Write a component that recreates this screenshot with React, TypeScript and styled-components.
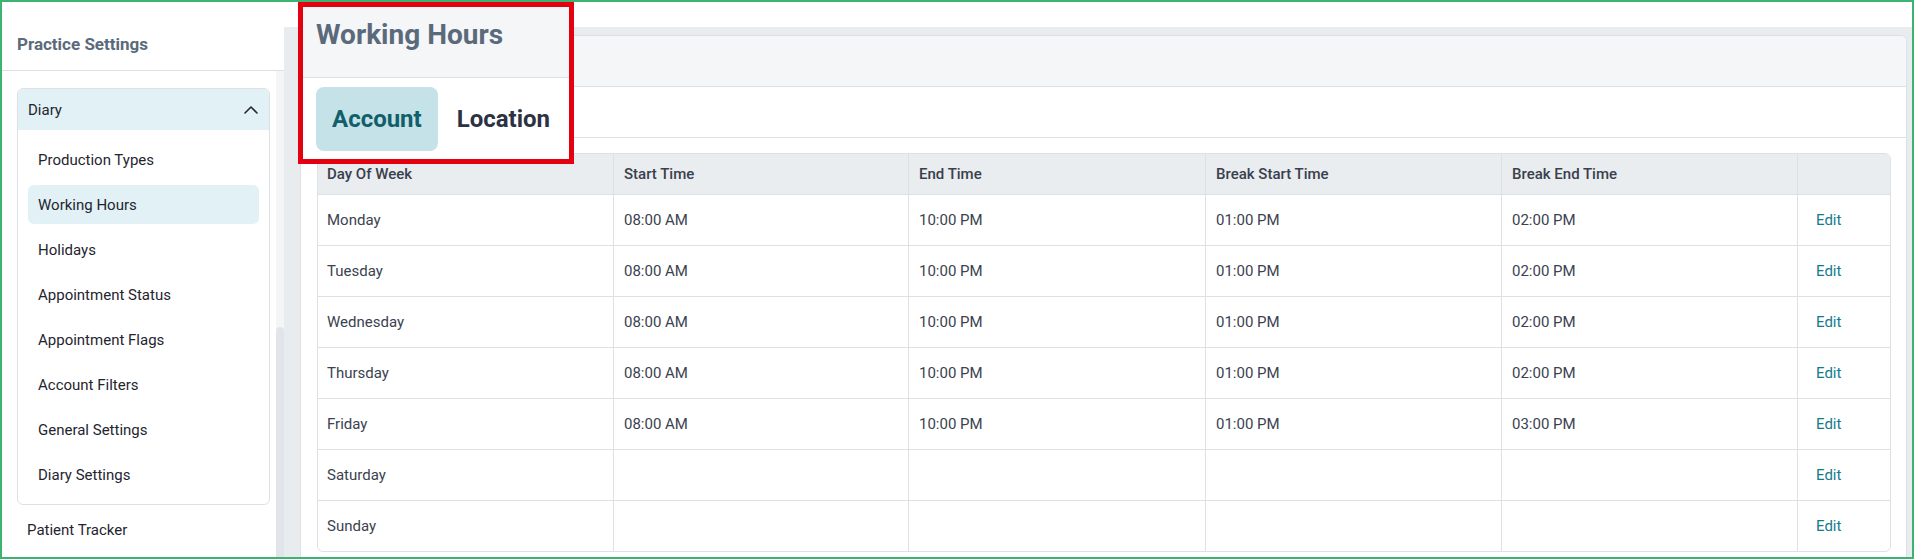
import styled, { createGlobalStyle } from 'styled-components';

const GlobalStyle = createGlobalStyle`
	html, body {
		margin: 0;
		padding: 0;
		background: #ffffff;
	}

	body {
		font-family: Roboto, "Liberation Sans", Arial, sans-serif;
	}

	*, *::before, *::after {
		box-sizing: border-box;
	}
`;

// -----------------------------------------------------------------------------

const DIARY_ITEMS = [
	'Production Types',
	'Working Hours',
	'Holidays',
	'Appointment Status',
	'Appointment Flags',
	'Account Filters',
	'General Settings',
	'Diary Settings',
];

type Hours = {
	day: string;
	start?: string;
	end?: string;
	breakStart?: string;
	breakEnd?: string;
};

const HOURS: Hours[] = [
	{ day: 'Monday', start: '08:00 AM', end: '10:00 PM', breakStart: '01:00 PM', breakEnd: '02:00 PM' },
	{ day: 'Tuesday', start: '08:00 AM', end: '10:00 PM', breakStart: '01:00 PM', breakEnd: '02:00 PM' },
	{ day: 'Wednesday', start: '08:00 AM', end: '10:00 PM', breakStart: '01:00 PM', breakEnd: '02:00 PM' },
	{ day: 'Thursday', start: '08:00 AM', end: '10:00 PM', breakStart: '01:00 PM', breakEnd: '02:00 PM' },
	{ day: 'Friday', start: '08:00 AM', end: '10:00 PM', breakStart: '01:00 PM', breakEnd: '03:00 PM' },
	{ day: 'Saturday' },
	{ day: 'Sunday' },
];

const COLUMNS = ['Day Of Week', 'Start Time', 'End Time', 'Break Start Time', 'Break End Time', ''];

// -----------------------------------------------------------------------------

function ChevronUp(): JSX.Element {
	return (
		<svg width="14" height="9" viewBox="0 0 14 9" fill="none">
			<path d="M1 8 L7 2 L13 8" stroke="#23272f" strokeWidth="1.6" strokeLinecap="round" strokeLinejoin="round" />
		</svg>
	);
}

export default function App(): JSX.Element {
	return (
		<Frame>
			<GlobalStyle />

			<Sidebar>
				<SidebarTitle>Practice Settings</SidebarTitle>
				<SidebarBody>
					<SidebarScroll>
						<Group>
							<GroupHeader>
								Diary
								<ChevronUp />
							</GroupHeader>
							<GroupItems>
								{DIARY_ITEMS.map((item) => (
									<NavItem key={item} $active={item === 'Working Hours'}>
										{item}
									</NavItem>
								))}
							</GroupItems>
						</Group>
						<TopNavItem>Patient Tracker</TopNavItem>
					</SidebarScroll>
					<ScrollTrack>
						<ScrollThumb />
					</ScrollTrack>
				</SidebarBody>
			</Sidebar>

			<Main>
				<TopStrip />
				<Content>
					<Card>
						{/* title and tabs are shown in the highlighted header below */}
						<CardHeader />
						<TabRow />

						<Table>
							<HeadRow>
								{COLUMNS.map((col, i) => (
									<HeadCell key={i}>{col}</HeadCell>
								))}
							</HeadRow>
							{HOURS.map((row) => (
								<Row key={row.day}>
									<Cell>{row.day}</Cell>
									<Cell>{row.start}</Cell>
									<Cell>{row.end}</Cell>
									<Cell>{row.breakStart}</Cell>
									<Cell>{row.breakEnd}</Cell>
									<Cell>
										<EditLink>Edit</EditLink>
									</Cell>
								</Row>
							))}
						</Table>
					</Card>
				</Content>
			</Main>

			<Callout>
				<CalloutHeader>
					<CalloutTitle>Working Hours</CalloutTitle>
				</CalloutHeader>
				<CalloutTabs>
					<CalloutTab $active>Account</CalloutTab>
					<CalloutTab>Location</CalloutTab>
				</CalloutTabs>
			</Callout>
		</Frame>
	);
}

// -----------------------------------------------------------------------------

const Frame = styled.div`
	position: relative;
	display: flex;
	width: 1914px;
	height: 559px;
	border: 2px solid #3cb371;
	overflow: hidden;
	background: #ffffff;
`;

const Sidebar = styled.aside`
	display: flex;
	flex-direction: column;
	width: 282px;
	flex-shrink: 0;
	background: #ffffff;
`;

const SidebarTitle = styled.div`
	display: flex;
	align-items: center;
	height: 69px;
	padding: 15px 0 0 15px;
	border-bottom: 1px solid #dde1e6;
	font-size: 17px;
	font-weight: 700;
	color: #5b6a7b;
`;

const SidebarBody = styled.div`
	display: flex;
	flex: 1;
	min-height: 0;
`;

const SidebarScroll = styled.div`
	flex: 1;
	padding: 17px 6px 0 15px;
	overflow: hidden;
`;

const ScrollTrack = styled.div`
	display: flex;
	flex-direction: column;
	width: 8px;
	background: #f4f5f7;
`;

const ScrollThumb = styled.div`
	flex: 1;
	margin-top: 256px;
	border-radius: 4px 4px 0 0;
	background: #e1e4e8;
`;

const Group = styled.div`
	border: 1px solid #dde1e6;
	border-radius: 6px;
	overflow: hidden;
`;

const GroupHeader = styled.div`
	display: flex;
	align-items: center;
	justify-content: space-between;
	height: 41px;
	padding: 0 11px 0 10px;
	background: #e2f1f5;
	font-size: 15px;
	color: #1f2530;
`;

const GroupItems = styled.div`
	display: flex;
	flex-direction: column;
	gap: 6px;
	padding: 10px;
`;

const NavItem = styled.div<{ $active?: boolean }>`
	display: flex;
	align-items: center;
	height: 39px;
	padding-left: 10px;
	border-radius: 6px;
	background: ${(p) => (p.$active ? '#e2f1f5' : 'transparent')};
	font-size: 15px;
	color: #1f2530;
`;

const TopNavItem = styled(NavItem)`
	margin-top: 5px;
`;

const Main = styled.main`
	display: flex;
	flex-direction: column;
	flex: 1;
	min-width: 0;
`;

const TopStrip = styled.div`
	height: 25px;
	background: #ffffff;
`;

const Content = styled.div`
	display: flex;
	flex: 1;
	padding: 8px 5px 0 16px;
	background: #e9ecef;
`;

const Card = styled.section`
	flex: 1;
	border: 1px solid #dde1e6;
	border-bottom: none;
	border-radius: 6px 6px 0 0;
	background: #ffffff;
	overflow: hidden;
`;

const CardHeader = styled.div`
	height: 51px;
	border-bottom: 1px solid #dde1e6;
	background: #f5f6f8;
`;

const TabRow = styled.div`
	height: 51px;
	border-bottom: 1px solid #dde1e6;
`;

const Table = styled.div`
	margin: 15px 15px 0 16px;
	border: 1px solid #dde1e6;
	border-radius: 6px;
	overflow: hidden;
`;

const HeadRow = styled.div`
	display: grid;
	grid-template-columns: 295px 295px 297px 296px 296px 1fr;
	height: 40px;
	background: #e9edf0;
`;

const Row = styled.div`
	display: grid;
	grid-template-columns: 295px 295px 297px 296px 296px 1fr;
	height: 51px;
	border-top: 1px solid #dde1e6;
`;

const HeadCell = styled.div`
	display: flex;
	align-items: center;
	padding-left: 9px;
	font-size: 15px;
	font-weight: 500;
	color: #39404d;

	& + & {
		border-left: 1px solid #dde1e6;
		padding-left: 10px;
	}
`;

const Cell = styled.div`
	display: flex;
	align-items: center;
	padding-left: 9px;
	font-size: 15px;
	color: #3b4250;

	& + & {
		border-left: 1px solid #dde1e6;
		padding-left: 10px;
	}
`;

const EditLink = styled.span`
	padding: 0 8px;
	color: #157b8c;
	cursor: pointer;
`;

// Highlight box drawn over the card's header and tabs
const Callout = styled.div`
	position: absolute;
	left: 296px;
	top: 0;
	width: 276px;
	height: 162px;
	display: flex;
	flex-direction: column;
	border: 5px solid #e3000f;
	background: #ffffff;
`;

const CalloutHeader = styled.div`
	height: 71px;
	padding: 12px 0 0 13px;
	border-bottom: 1px solid #dde1e6;
	background: #f5f6f8;
`;

const CalloutTitle = styled.div`
	font-size: 28px;
	line-height: 32px;
	font-weight: 700;
	color: #5b6a7b;
`;

const CalloutTabs = styled.div`
	display: flex;
	gap: 3px;
	padding: 9px 0 0 13px;
`;

const CalloutTab = styled.div<{ $active?: boolean }>`
	display: flex;
	align-items: center;
	height: 64px;
	padding: 0 16px;
	border-radius: 8px;
	background: ${(p) => (p.$active ? '#c4e2e7' : 'transparent')};
	font-size: 24px;
	font-weight: 700;
	color: ${(p) => (p.$active ? '#125e6b' : '#2c3244')};
`;
